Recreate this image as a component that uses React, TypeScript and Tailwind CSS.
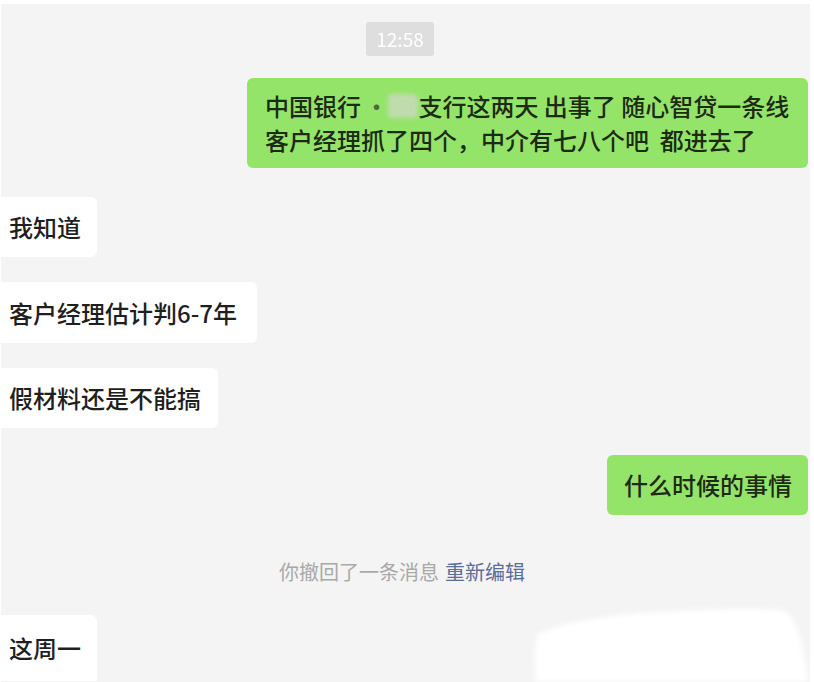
export default function App() {
  const font = { fontFamily: '"Noto Sans CJK SC", "Noto Sans", sans-serif' };

  return (
    <div
      className="relative w-[814px] h-[682px] overflow-hidden bg-white text-[#1f1f1f]"
      style={font}
    >
      <div className="absolute left-[1px] top-[4px] right-[4px] bottom-0 bg-[#f4f4f4]" />

      <div className="relative flex flex-col pr-[6px]">
        {/* time */}
        <div className="flex justify-center pt-[22px] pr-[8px]">
          <div className="h-[34px] w-[68px] flex items-center justify-center bg-[#dedede] rounded-[3px] text-white text-[19px] blur-[0.6px]">
            12:58
          </div>
        </div>

        {/* outgoing 1 */}
        <div className="flex justify-end mt-[22px]">
          <div className="w-[561px] h-[90px] bg-[#95e46a] rounded-[6px] pl-[18px] pt-[11px] text-[24px] leading-[34px] text-[#1d2a14] font-medium whitespace-pre">
            <div className="flex items-center">
              <span>中国银行 </span>
              <span className="text-[#4d6b3f] -ml-[2px]">·</span>
              <span className="inline-block w-[30px] h-[24px] bg-[#bfdcae] blur-[2px] rounded-[4px]" />
              <span>支行这两天 出事了 随心智贷一条线</span>
            </div>
            <div>客户经理抓了四个，中介有七八个吧  都进去了</div>
          </div>
        </div>

        {/* incoming */}
        <div className="flex mt-[29px]">
          <div className="h-[60px] w-[97px] bg-white rounded-r-[6px] pl-[9px] flex items-center text-[24px] font-medium">
            我知道
          </div>
        </div>
        <div className="flex mt-[25px]">
          <div className="h-[61px] w-[257px] bg-white rounded-r-[6px] pl-[9px] flex items-center text-[24px] font-medium">
            客户经理估计判6-7年
          </div>
        </div>
        <div className="flex mt-[25px]">
          <div className="h-[60px] w-[218px] bg-white rounded-r-[6px] pl-[9px] flex items-center text-[24px] font-medium">
            假材料还是不能搞
          </div>
        </div>

        {/* outgoing 2 */}
        <div className="flex justify-end mt-[27px]">
          <div className="h-[60px] w-[201px] bg-[#95e46a] rounded-[6px] pl-[17px] flex items-center text-[24px] text-[#1d2a14] font-medium">
            什么时候的事情
          </div>
        </div>

        {/* recall notice */}
        <div className="flex justify-center mt-[42px] pr-[4px] text-[20px] leading-[30px]">
          <span className="text-[#a9a9a9]">你撤回了一条消息</span>
          <span className="text-[#5a6d97] ml-[6px]">重新编辑</span>
        </div>

        {/* incoming last */}
        <div className="flex mt-[28px]">
          <div className="h-[66px] w-[97px] bg-white rounded-tr-[6px] pl-[9px] flex items-center text-[24px] font-medium">
            这周一
          </div>
        </div>
      </div>

      {/* white smudge */}
      <svg
        className="absolute left-[530px] top-[604px]"
        width="284"
        height="78"
        viewBox="0 0 284 78"
      >
        <defs>
          <filter id="soft" x="-10%" y="-10%" width="120%" height="130%">
            <feGaussianBlur stdDeviation="2.5" />
          </filter>
        </defs>
        <path
          d="M8 30 C 30 20, 60 14, 100 10 C 150 6, 210 4, 250 6 C 266 8, 274 40, 278 78 L 6 78 C 4 60, 4 42, 8 30 Z"
          fill="#ffffff"
          filter="url(#soft)"
        />
      </svg>
    </div>
  );
}
